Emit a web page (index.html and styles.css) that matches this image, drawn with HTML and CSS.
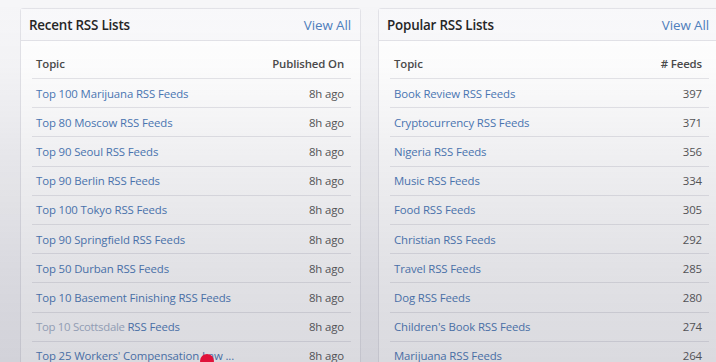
FILE: index.html
```html
<!DOCTYPE html>
<html lang="en">
<head>
<meta charset="utf-8">
<title>RSS Lists</title>
<link rel="stylesheet" href="styles.css">
</head>
<body>
<div class="page">
  <section class="card">
    <header class="card-head">
      <h2 class="card-title">Recent RSS Lists</h2>
      <a class="view-all" href="#">View All</a>
    </header>
    <div class="card-body">
      <div class="row head"><span>Topic</span><span>Published On</span></div>
      <div class="row"><a href="#">Top 100 Marijuana RSS Feeds</a><span>8h ago</span></div>
      <div class="row"><a href="#">Top 80 Moscow RSS Feeds</a><span>8h ago</span></div>
      <div class="row"><a href="#">Top 90 Seoul RSS Feeds</a><span>8h ago</span></div>
      <div class="row"><a href="#">Top 90 Berlin RSS Feeds</a><span>8h ago</span></div>
      <div class="row"><a href="#">Top 100 Tokyo RSS Feeds</a><span>8h ago</span></div>
      <div class="row"><a href="#">Top 90 Springfield RSS Feeds</a><span>8h ago</span></div>
      <div class="row"><a href="#">Top 50 Durban RSS Feeds</a><span>8h ago</span></div>
      <div class="row"><a href="#">Top 10 Basement Finishing RSS Feeds</a><span>8h ago</span></div>
      <div class="row"><a href="#"><span class="blur">Top 10 Scottsdale</span> RSS Feeds</a><span>8h ago</span></div>
      <div class="row"><a href="#">Top 25 Workers' Compensation Law ...</a><span>8h ago</span></div>
    </div>
  </section>
  <section class="card">
    <header class="card-head">
      <h2 class="card-title">Popular RSS Lists</h2>
      <a class="view-all" href="#">View All</a>
    </header>
    <div class="card-body">
      <div class="row head"><span>Topic</span><span># Feeds</span></div>
      <div class="row"><a href="#">Book Review RSS Feeds</a><span>397</span></div>
      <div class="row"><a href="#">Cryptocurrency RSS Feeds</a><span>371</span></div>
      <div class="row"><a href="#">Nigeria RSS Feeds</a><span>356</span></div>
      <div class="row"><a href="#">Music RSS Feeds</a><span>334</span></div>
      <div class="row"><a href="#">Food RSS Feeds</a><span>305</span></div>
      <div class="row"><a href="#">Christian RSS Feeds</a><span>292</span></div>
      <div class="row"><a href="#">Travel RSS Feeds</a><span>285</span></div>
      <div class="row"><a href="#">Dog RSS Feeds</a><span>280</span></div>
      <div class="row"><a href="#">Children's Book RSS Feeds</a><span>274</span></div>
      <div class="row"><a href="#">Marijuana RSS Feeds</a><span>264</span></div>
    </div>
  </section>
</div>
<div class="shade"></div>
<div class="cursor"></div>
</body>
</html>
```
FILE: styles.css
```css
html, body {
  margin: 0;
  padding: 0;
  height: 100%;
  overflow: hidden;
}
body {
  background: #f6f6f8;
  font-family: "Open Sans", "Noto Sans", "Liberation Sans", sans-serif;
  color: #333;
}
.page {
  display: flex;
  gap: 17px;
  padding: 8px 0 0 20px;
  overflow: hidden;
}
.card {
  flex: 0 0 341px;
  box-sizing: border-box;
  background: #fff;
  border: 1px solid #e3e3e8;
  border-radius: 3px;
}
.card-head {
  height: 31px;
  display: flex;
  align-items: center;
  justify-content: space-between;
  padding: 0 9px 0 8px;
  background: #f9f9fb;
  border-bottom: 1px solid #e3e3e8;
}
.card-title {
  margin: 0;
  font-size: 13.4px;
  font-weight: 600;
  letter-spacing: -0.2px;
  color: #262626;
}
.view-all {
  font-size: 13.4px;
  letter-spacing: -0.1px;
  color: #4f80bd;
  text-decoration: none;
}
.card-body {
  padding: 7px 9px 0 11px;
}
.row {
  display: flex;
  justify-content: space-between;
  align-items: center;
  height: 29.2px;
  box-sizing: border-box;
  padding: 0 7px 0 4px;
  border-top: 1px solid #e6e6ea;
  font-size: 11.4px;
  letter-spacing: -0.12px;
  color: #555;
  white-space: nowrap;
}
.row.head {
  border-top: none;
  height: 30px;
  font-weight: 600;
  color: #4a4a4a;
}
.row a {
  color: #4a78b6;
  text-decoration: none;
}
.blur {
  color: #a3b1c8;
  letter-spacing: -0.3px;
}
.shade {
  position: fixed;
  inset: 0;
  pointer-events: none;
  background: linear-gradient(to bottom,
    rgba(70, 70, 95, 0) 0%,
    rgba(70, 70, 95, 0.02) 18%,
    rgba(70, 70, 95, 0.09) 45%,
    rgba(70, 70, 95, 0.16) 75%,
    rgba(70, 70, 95, 0.2) 100%);
}
.cursor {
  position: fixed;
  left: 200px;
  top: 354px;
  width: 14px;
  height: 14px;
  border-radius: 50%;
  background: #e0123a;
}
```
